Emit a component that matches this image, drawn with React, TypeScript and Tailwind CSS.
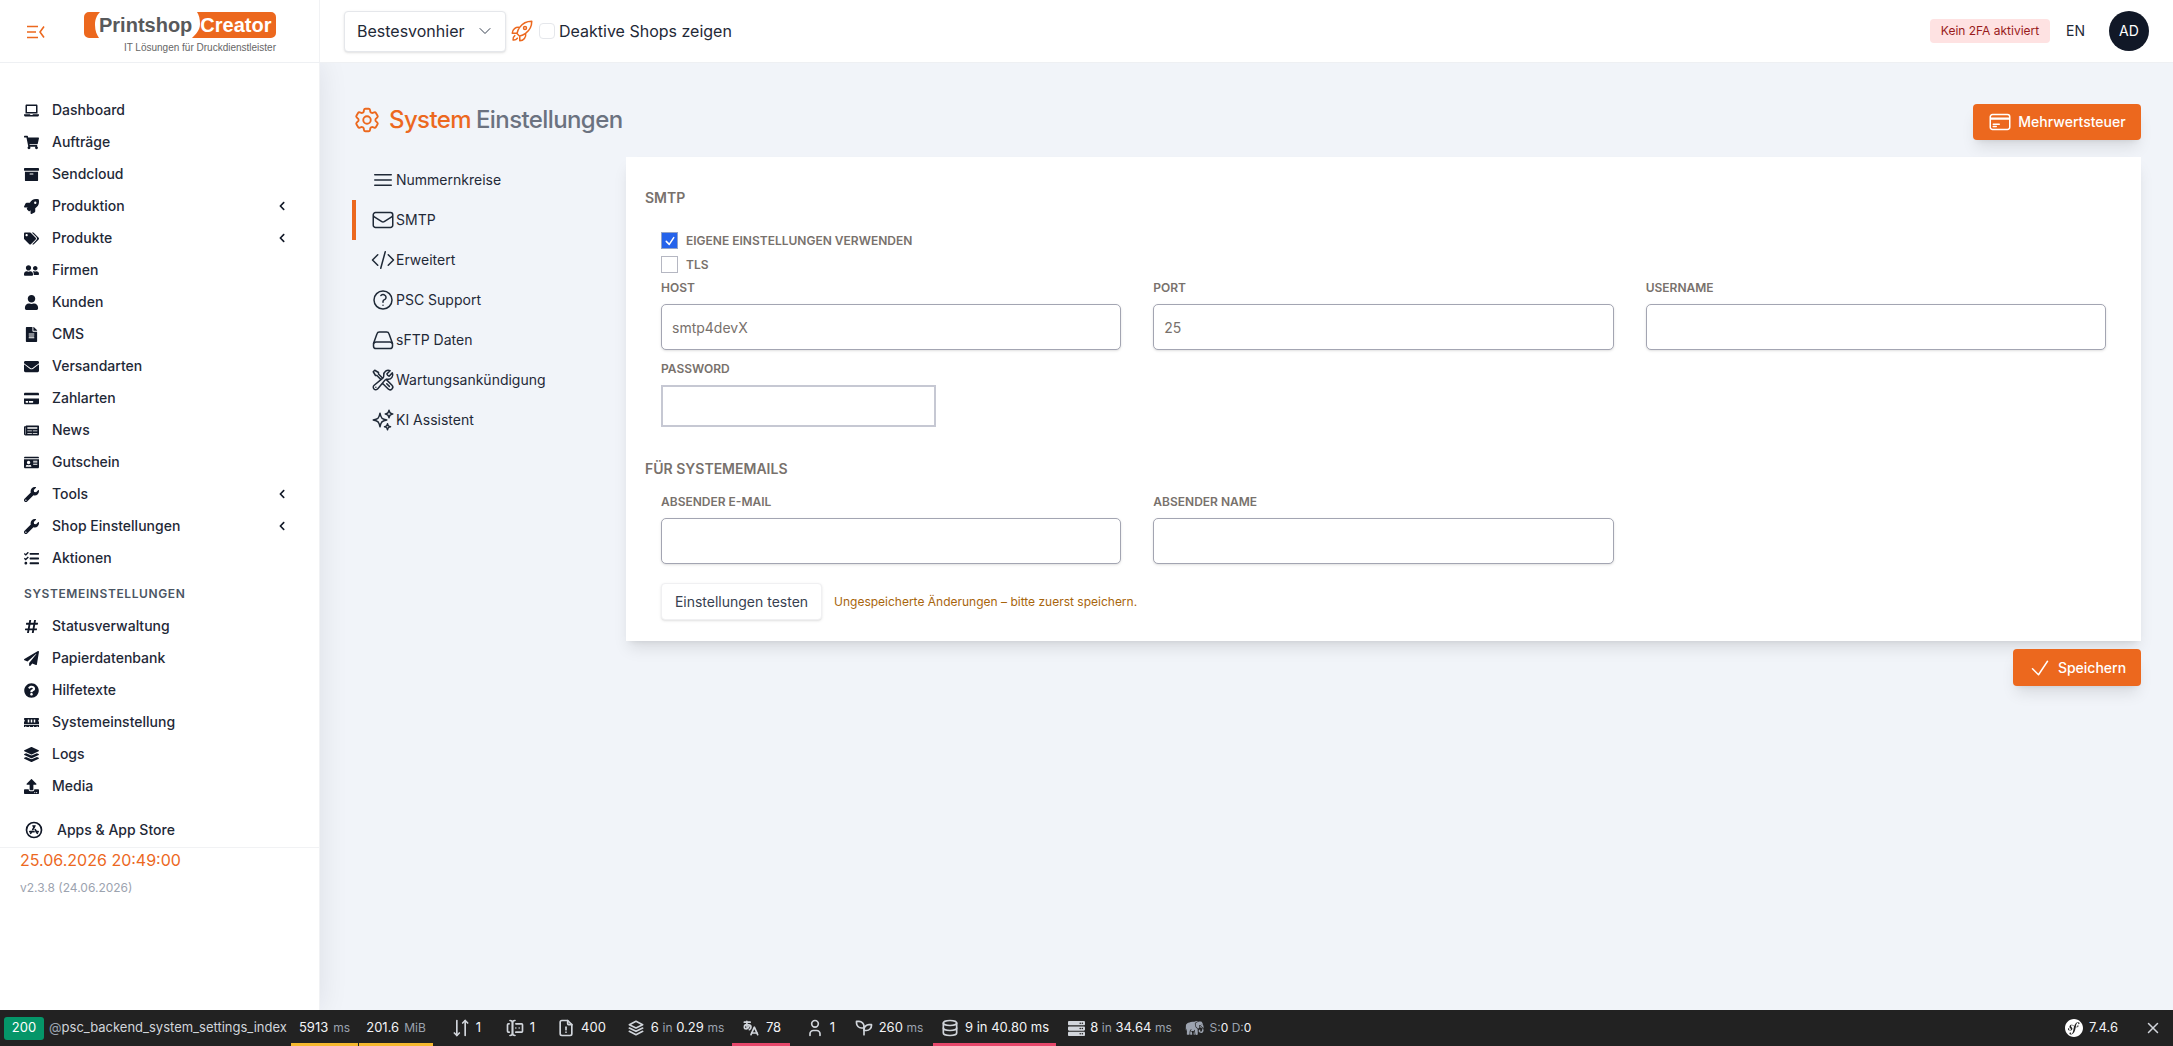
import React from 'react'
import {
  FaLaptop, FaShoppingCart, FaArchive, FaRocket, FaTags, FaUserFriends, FaUser, FaFileAlt, FaEnvelope,
  FaCreditCard, FaNewspaper, FaIdCard, FaWrench, FaTasks, FaHashtag, FaPaperPlane, FaQuestionCircle,
  FaMemory, FaLayerGroup, FaUpload, FaChevronLeft, FaServer,
} from 'react-icons/fa'
import {
  HiOutlineBars3, HiOutlineEnvelope, HiOutlineCodeBracket, HiOutlineQuestionMarkCircle, HiOutlineWrenchScrewdriver,
  HiOutlineSparkles, HiOutlineCreditCard, HiOutlineCog6Tooth, HiOutlineRocketLaunch, HiOutlineCheck, HiOutlineChevronDown,
} from 'react-icons/hi2'
import {
  TbBrandAppstore, TbLanguageHiragana, TbSeeding, TbForms, TbFileAlert, TbArrowsDownUp, TbStack2, TbDatabase, TbUser, TbX,
} from 'react-icons/tb'
import { SiSymfony } from 'react-icons/si'
import { GiElephant } from 'react-icons/gi'

const topNav = [
  { label: 'Dashboard', icon: FaLaptop },
  { label: 'Aufträge', icon: FaShoppingCart },
  { label: 'Sendcloud', icon: FaArchive },
  { label: 'Produktion', icon: FaRocket, more: true },
  { label: 'Produkte', icon: FaTags, more: true },
  { label: 'Firmen', icon: FaUserFriends },
  { label: 'Kunden', icon: FaUser },
  { label: 'CMS', icon: FaFileAlt },
  { label: 'Versandarten', icon: FaEnvelope },
  { label: 'Zahlarten', icon: FaCreditCard },
  { label: 'News', icon: FaNewspaper },
  { label: 'Gutschein', icon: FaIdCard },
  { label: 'Tools', icon: FaWrench, more: true },
  { label: 'Shop Einstellungen', icon: FaWrench, more: true },
  { label: 'Aktionen', icon: FaTasks },
]

const systemNav = [
  { label: 'Statusverwaltung', icon: FaHashtag },
  { label: 'Papierdatenbank', icon: FaPaperPlane },
  { label: 'Hilfetexte', icon: FaQuestionCircle },
  { label: 'Systemeinstellung', icon: FaMemory },
  { label: 'Logs', icon: FaLayerGroup },
  { label: 'Media', icon: FaUpload },
]

const DriveIcon = () => (
  <svg viewBox="0 0 24 24" width="24" height="24" fill="none" stroke="currentColor" strokeWidth="1.5" strokeLinecap="round" strokeLinejoin="round">
    <path d="M2.5 15.5 6 5.8A2.6 2.6 0 0 1 8.4 4h7.2A2.6 2.6 0 0 1 18 5.8l3.5 9.7" />
    <rect x="2.5" y="14" width="19" height="6.5" rx="2.6" />
  </svg>
)

const tabs = [
  { label: 'Nummernkreise', icon: <HiOutlineBars3 size={24} /> },
  { label: 'SMTP', icon: <HiOutlineEnvelope size={24} />, active: true },
  { label: 'Erweitert', icon: <HiOutlineCodeBracket size={24} /> },
  { label: 'PSC Support', icon: <HiOutlineQuestionMarkCircle size={24} /> },
  { label: 'sFTP Daten', icon: <DriveIcon /> },
  { label: 'Wartungsankündigung', icon: <HiOutlineWrenchScrewdriver size={24} /> },
  { label: 'KI Assistent', icon: <HiOutlineSparkles size={24} /> },
]

const NavRow = ({ label, icon: Icon, more }: { label: string; icon: React.ComponentType<{ size?: number }>; more?: boolean }) => (
  <div className="h-8 flex items-center pl-6 pr-[32px] text-sm font-medium text-[#1f2937]">
    <span className="w-7 flex items-center text-[#111827]">
      <Icon size={15} />
    </span>
    <span className="flex-1">{label}</span>
    {more && <FaChevronLeft size={10} className="text-[#111827]" />}
  </div>
)

const FieldLabel = ({ children }: { children: React.ReactNode }) => (
  <label className="block text-xs leading-4 font-semibold text-[#78716c] uppercase">{children}</label>
)

const Field = ({ label, value }: { label: string; value?: string }) => (
  <div>
    <FieldLabel>{label}</FieldLabel>
    <input
      readOnly
      defaultValue={value}
      className="mt-2 w-full h-[46px] px-[10px] bg-white rounded-[5px] border border-[#a3a5b2] shadow-sm text-sm text-[#78716c] outline-none"
    />
  </div>
)

const BarItem = ({ w, line, children }: { w: string; line?: string; children: React.ReactNode }) => (
  <div className={`${w} ${line ?? 'border-transparent'} h-full shrink-0 flex items-center justify-center gap-[5px] border-b-[3px] pt-[3px]`}>
    {children}
  </div>
)

const Unit = ({ children }: { children: React.ReactNode }) => <span className="text-xs text-[#9ca3af]">{children}</span>

export default function App() {
  return (
    <div className="h-screen flex flex-col overflow-hidden bg-[#f1f4f9] font-['Inter',sans-serif]">
      {/* top bar */}
      <header className="h-[63px] shrink-0 flex items-center bg-white border-b border-[#eef0f3] relative z-20">
        <div className="w-[320px] h-full shrink-0 flex items-start border-r border-[#f1f2f4]">
          <svg viewBox="0 0 18 14" width="18" height="14" className="ml-[27px] mt-[25px] text-[#ec681e]" fill="none" stroke="currentColor" strokeWidth="1.6">
            <path d="M0 1.5h11M0 7h9M0 12.5h11M17 1.5 13 7l4 5.5" />
          </svg>
          <div className="ml-[39px] mt-3">
            <div className="relative w-[192px] h-[26px] flex items-center font-['Liberation_Sans',sans-serif] font-bold text-xl">
              <svg viewBox="0 0 192 26" className="absolute inset-0" width="192" height="26">
                <path d="M5 0h11c-3 3-5 7-5 13s2 10 4 13H5a5 5 0 0 1-5-5V5a5 5 0 0 1 5-5Z" fill="#ec681e" />
                <path d="M113 0h74a5 5 0 0 1 5 5v16a5 5 0 0 1-5 5H108c4-4 8-8 8-14 0-5-1-9-3-12Z" fill="#ec681e" />
              </svg>
              <span className="relative ml-[15px] text-[#58595b]">Printshop</span>
              <span className="relative ml-[8px] text-white">Creator</span>
            </div>
            <div className="mt-1 text-right text-[10px] leading-3 text-[#666] font-['Liberation_Sans',sans-serif]">IT Lösungen für Druckdienstleister</div>
          </div>
        </div>
        <div className="flex-1 flex items-center pl-6 pr-6">
          <div className="w-[162px] h-[41px] flex items-center justify-between pl-3 pr-3 bg-white border border-[#e5e7eb] rounded-sm shadow-sm text-base text-[#1f2937]">
            Bestesvonhier
            <HiOutlineChevronDown size={16} className="text-[#374151]" />
          </div>
          <HiOutlineRocketLaunch size={24} className="ml-1 text-[#ec681e]" />
          <span className="ml-[5px] w-4 h-4 rounded-sm border border-[#e5e7eb] bg-white" />
          <span className="ml-1 text-base text-[#1f2937]">Deaktive Shops zeigen</span>
          <span className="ml-auto h-6 w-[120px] flex items-center justify-center rounded bg-[#fee2e2] text-xs text-[#991b1b]">Kein 2FA aktiviert</span>
          <span className="ml-4 text-sm text-[#1f2937]">EN</span>
          <span className="ml-6 w-10 h-10 rounded-full bg-[#111827] text-white text-sm flex items-center justify-center">AD</span>
        </div>
      </header>

      <div className="flex-1 min-h-0 flex">
        {/* sidebar */}
        <aside className="w-[320px] shrink-0 pt-[31px] bg-white border-r border-[#f1f2f4] shadow-[0_0_28px_rgba(15,23,42,0.09)] relative z-10">
          {topNav.map(item => (
            <NavRow key={item.label} {...item} />
          ))}
          <div className="h-9 pt-[4px] pl-6 flex items-center text-xs font-semibold tracking-wider text-[#4b5563]">SYSTEMEINSTELLUNGEN</div>
          {systemNav.map(item => (
            <NavRow key={item.label} {...item} />
          ))}
          <div className="mt-[10px] h-9 pl-6 flex items-center gap-[13px] text-sm font-medium text-[#1f2937] border-b border-[#f1f2f4]">
            <TbBrandAppstore size={20} className="text-[#111827]" />
            Apps &amp; App Store
          </div>
          <div className="pl-5 text-base leading-6 text-[#ec681e]">25.06.2026 20:49:00</div>
          <div className="pl-5 mt-2 text-xs leading-4 text-[#9ca3af]">v2.3.8 (24.06.2026)</div>
        </aside>

        {/* content */}
        <main className="flex-1 min-w-0 pt-[41px] pl-8 pr-8">
          <div className="h-[53px] flex items-start justify-between">
            <h1 className="h-8 flex items-center text-2xl font-medium tracking-tight">
              <HiOutlineCog6Tooth size={30} className="text-[#ec681e]" />
              <span className="ml-[7px] text-[#ec681e]">System</span>
              <span className="ml-[5px] text-[#6b7280]">Einstellungen</span>
            </h1>
            <button className="w-[168px] h-9 flex items-center justify-center gap-[6px] bg-[#ec681e] text-white text-sm font-medium rounded-sm shadow-lg">
              <HiOutlineCreditCard size={24} />
              Mehrwertsteuer
            </button>
          </div>

          <div className="flex items-start">
            <nav className="w-[274px] shrink-0 pt-[3px]">
              {tabs.map(tab => (
                <div
                  key={tab.label}
                  className={`h-10 flex items-center pl-[15px] border-l-4 text-sm text-[#1f2937] gap-px ${tab.active ? 'border-[#ec681e]' : 'border-transparent'}`}
                >
                  {tab.icon}
                  <span>{tab.label}</span>
                </div>
              ))}
            </nav>

            <div className="flex-1 min-w-0">
              <section className="bg-white shadow-lg h-[484px] pt-[31px] pl-[19px] pr-[35px]">
                <h2 className="text-sm leading-5 font-semibold text-[#78716c]">SMTP</h2>
                <div className="pl-4">
                  <div className="mt-6 h-[17px] flex items-center gap-2">
                    <span className="w-[17px] h-[17px] flex items-center justify-center bg-[#2563eb] border border-[#93a4c8] text-white">
                      <HiOutlineCheck size={12} strokeWidth={3} />
                    </span>
                    <FieldLabel>Eigene Einstellungen verwenden</FieldLabel>
                  </div>
                  <div className="mt-[7px] h-[17px] flex items-center gap-2">
                    <span className="w-[17px] h-[17px] bg-white border border-[#b5b7c2]" />
                    <FieldLabel>TLS</FieldLabel>
                  </div>
                  <div className="mt-[7px] grid grid-cols-3 gap-x-8">
                    <Field label="Host" value="smtp4devX" />
                    <Field label="Port" value="25" />
                    <Field label="Username" />
                  </div>
                  <div className="mt-[11px]">
                    <FieldLabel>Password</FieldLabel>
                    <input readOnly className="mt-2 w-[275px] h-[42px] block bg-white border-2 border-[#c6c8d3] outline-none" />
                  </div>
                </div>
                <h2 className="mt-8 text-sm leading-5 font-semibold text-[#78716c]">FÜR SYSTEMEMAILS</h2>
                <div className="pl-4">
                  <div className="mt-[15px] grid grid-cols-3 gap-x-8">
                    <Field label="Absender E-Mail" />
                    <Field label="Absender Name" />
                  </div>
                  <div className="mt-[19px] flex items-center gap-3">
                    <button className="w-[161px] h-[37px] bg-white border border-[#f0f0f2] rounded-sm shadow-sm text-sm text-[#374151]">Einstellungen testen</button>
                    <span className="text-xs text-[#a8650c]">Ungespeicherte Änderungen – bitte zuerst speichern.</span>
                  </div>
                </div>
              </section>
              <div className="mt-2 flex justify-end">
                <button className="w-[128px] h-[37px] flex items-center justify-center gap-[6px] bg-[#ec681e] text-white text-sm font-medium rounded-sm shadow-lg">
                  <HiOutlineCheck size={24} />
                  Speichern
                </button>
              </div>
            </div>
          </div>
        </main>
      </div>

      {/* profiler bar */}
      <footer className="h-9 shrink-0 flex items-center bg-[#222222] text-[13px] text-[#f3f4f6] relative z-30">
        <span className="ml-1 w-10 h-[23px] flex items-center justify-center rounded-[3px] bg-[#059669] text-white">200</span>
        <span className="ml-[5px] w-[242px] text-[#d1d5db]"><span className="text-[#9ca3af]">@</span>psc_backend_system_settings_index</span>
        <BarItem w="w-[67px]" line="border-[#f5b82e]">5913 <Unit>ms</Unit></BarItem>
        <BarItem w="ml-px w-[74px]" line="border-[#f5b82e]">201.6 <Unit>MiB</Unit></BarItem>
        <BarItem w="ml-[9px] w-[48px]"><TbArrowsDownUp size={20} className="text-[#d1d5db]" />1</BarItem>
        <BarItem w="ml-[10px] w-[40px]"><TbForms size={20} className="text-[#d1d5db]" />1</BarItem>
        <BarItem w="ml-[10px] w-[62px]"><TbFileAlert size={20} className="text-[#d1d5db]" />400</BarItem>
        <BarItem w="ml-[10px] w-[106px]"><TbStack2 size={20} className="text-[#d1d5db]" /><span>6 <Unit>in</Unit> 0.29 <Unit>ms</Unit></span></BarItem>
        <BarItem w="ml-[4px] w-[58px]" line="border-[#e6476b]"><TbLanguageHiragana size={20} className="text-[#d1d5db]" />78</BarItem>
        <BarItem w="ml-[10px] w-[40px]"><TbUser size={20} className="text-[#d1d5db]" />1</BarItem>
        <BarItem w="ml-[10px] w-[77px]"><TbSeeding size={20} className="text-[#d1d5db]" /><span>260 <Unit>ms</Unit></span></BarItem>
        <BarItem w="ml-[6px] w-[123px]" line="border-[#e6476b]"><TbDatabase size={20} className="text-[#d1d5db]" /><span>9 in 40.80 ms</span></BarItem>
        <BarItem w="ml-[10px] w-[108px]"><FaServer size={17} className="text-[#d1d5db]" /><span>8 <Unit>in</Unit> 34.64 <Unit>ms</Unit></span></BarItem>
        <BarItem w="ml-[8px] w-[72px]"><GiElephant size={20} className="text-[#9ca3af]" /><span className="text-xs"><Unit>S:</Unit>0 <Unit>D:</Unit>0</span></BarItem>
        <div className="ml-auto flex items-center gap-[6px] pr-[11px]">
          <SiSymfony size={18} className="text-white" />
          <span className="text-[13px]">7.4.6</span>
          <TbX size={18} className="ml-[20px] text-[#d1d5db]" />
        </div>
      </footer>
    </div>
  )
}
